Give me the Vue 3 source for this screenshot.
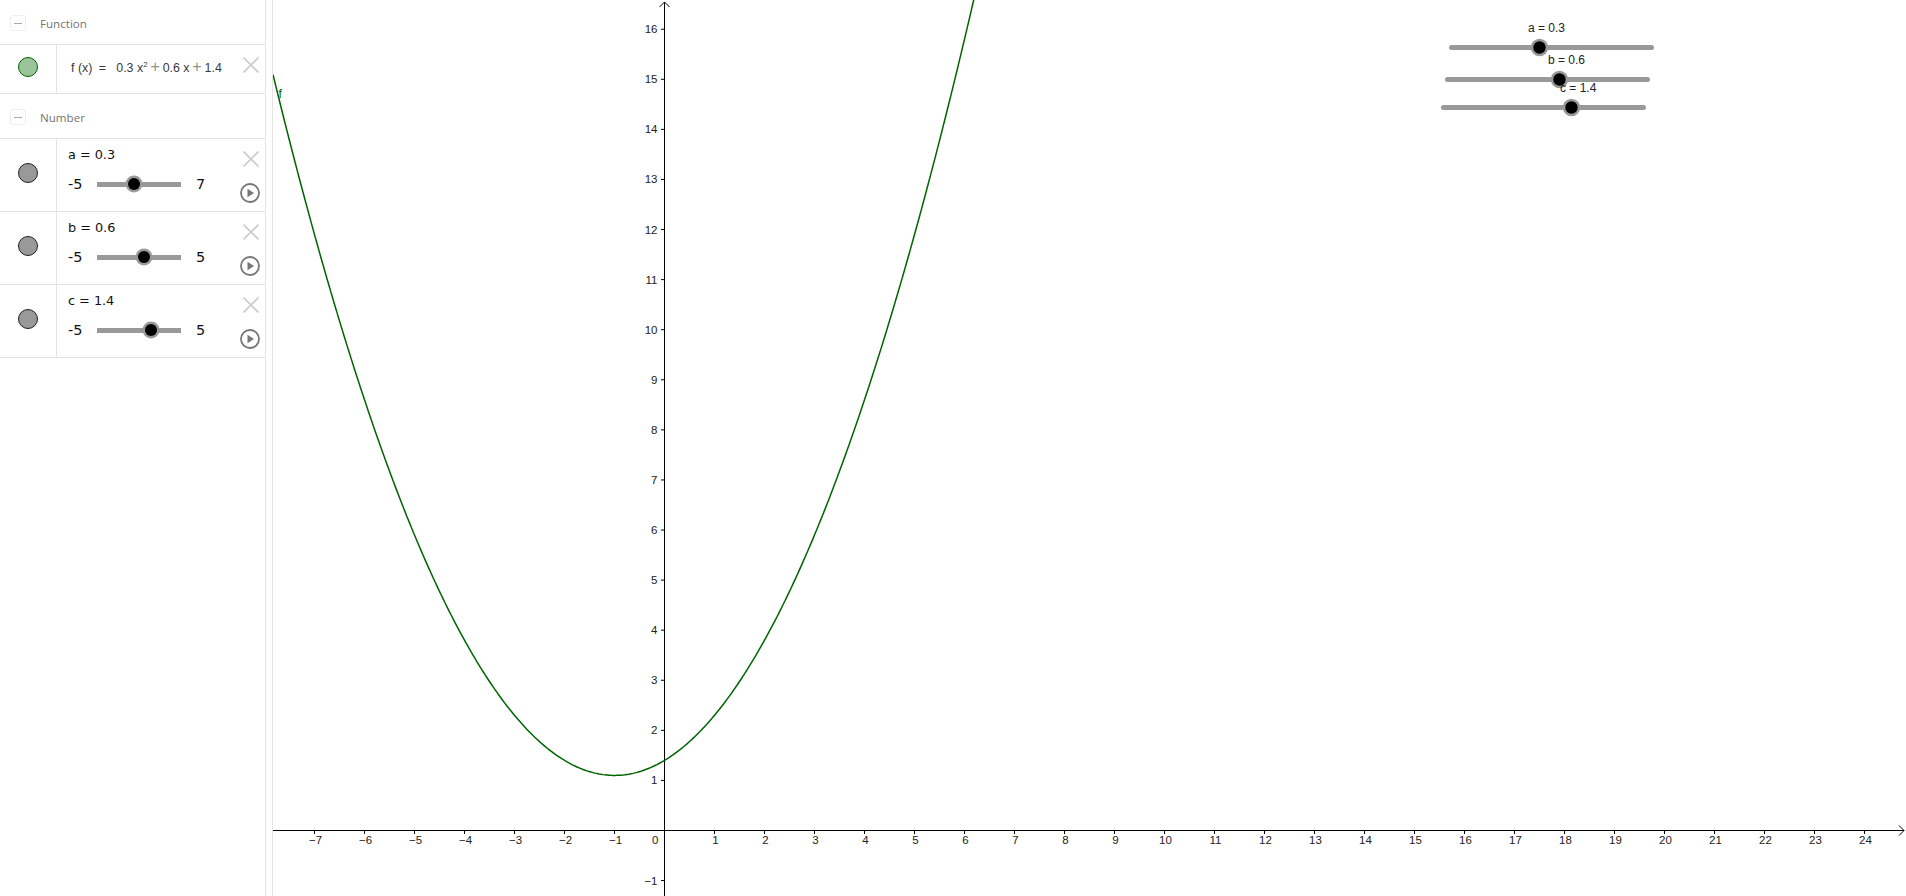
<script setup>
import { computed } from 'vue'

const originX = 664.5
const originY = 830.5
const unit = 50
const yUnit = 50.08
const width = 1633

const sx = (x) => originX - 273 + x * unit
const sy = (y) => originY - y * yUnit

const numbers = [
  { name: 'a', value: 0.3, min: -5, max: 7 },
  { name: 'b', value: 0.6, min: -5, max: 5 },
  { name: 'c', value: 1.4, min: -5, max: 5 },
].map((n) => ({ ...n, pct: ((n.value - n.min) / (n.max - n.min)) * 100 }))

const canvasSliders = [
  { label: 'a = 0.3', x1: 178.5, x2: 378.5, y: 47.5, tx: 266.5, lx: 255, ly: 32 },
  { label: 'b = 0.6', x1: 174.5, x2: 374.5, y: 79.5, tx: 286.5, lx: 275, ly: 64 },
  { label: 'c = 1.4', x1: 170.5, x2: 370.5, y: 107.5, tx: 298.5, lx: 287, ly: 92 },
]

const curve = computed(() => {
  const pts = []
  for (let px = 0; px <= 720; px += 2) {
    const x = (px - (originX - 273)) / unit
    const y = 0.3 * x * x + 0.6 * x + 1.4
    const py = sy(y)
    if (py > -10) pts.push(`${px},${py.toFixed(2)}`)
  }
  return pts.join(' ')
})

const xTicks = []
for (let i = -7; i <= 24; i++) if (i !== 0) xTicks.push(i)
const yTicks = []
for (let i = -1; i <= 16; i++) if (i !== 0) yTicks.push(i)
const fmt = (n) => (n < 0 ? '\u2212' + -n : '' + n)
</script>

<template>
  <div class="app">
    <aside class="panel">
      <div class="group">
        <span class="collapse"><i></i></span>
        <span class="group-name">Function</span>
      </div>
      <div class="row row-fn">
        <div class="marble-cell"><span class="marble green"></span></div>
        <div class="body">
          <div class="equation">f (x) <b>=</b> 0.3 x<sup>2</sup> <em>+</em> 0.6 x <em>+</em> 1.4</div>
        </div>
        <div class="actions">
          <svg class="x" viewBox="0 0 16 16"><path d="M0.5 0.5 15.5 15.5M15.5 0.5 0.5 15.5" /></svg>
        </div>
      </div>
      <div class="group">
        <span class="collapse"><i></i></span>
        <span class="group-name">Number</span>
      </div>
      <div v-for="n in numbers" :key="n.name" class="row">
        <div class="marble-cell"><span class="marble gray"></span></div>
        <div class="body">
          <div class="def">{{ n.name }} = {{ n.value }}</div>
          <div class="slider-line">
            <span class="bound min">{{ n.min }}</span>
            <span class="track"><span class="thumb" :style="{ left: n.pct + '%' }"></span></span>
            <span class="bound">{{ n.max }}</span>
          </div>
        </div>
        <div class="actions">
          <svg class="x" viewBox="0 0 16 16"><path d="M0.5 0.5 15.5 15.5M15.5 0.5 0.5 15.5" /></svg>
          <svg class="play" viewBox="0 0 20 20">
            <circle cx="10" cy="10" r="9" />
            <path d="M7.5 5.8 14 10 7.5 14.2Z" />
          </svg>
        </div>
      </div>
    </aside>
    <div class="splitter"></div>
    <svg class="canvas" :viewBox="`0 0 ${width} 896`">
      <g class="axes">
        <path :d="`M0 ${originY}H${width - 2}`" />
        <path :d="`M${originX - 273} 896V2`" />
        <path :d="`M${width - 7} ${originY - 5}L${width - 2} ${originY}L${width - 7} ${originY + 5}`" />
        <path :d="`M${originX - 273 - 5} 7L${originX - 273} 2L${originX - 273 + 5} 7`" />
        <path v-for="t in xTicks" :key="'xt' + t" :d="`M${sx(t)} ${originY}v3.5`" />
        <path v-for="t in yTicks" :key="'yt' + t" :d="`M${originX - 273} ${sy(t)}h-3.5`" />
      </g>
      <g class="labels">
        <text v-for="t in xTicks" :key="'xl' + t" :x="sx(t) + 1" y="844" text-anchor="middle">{{ fmt(t) }}</text>
        <text v-for="t in yTicks" :key="'yl' + t" :x="originX - 273 - 7" :y="sy(t) + 4" text-anchor="end">{{ fmt(t) }}</text>
        <text :x="originX - 273 - 6" y="844" text-anchor="end">0</text>
      </g>
      <polyline class="curve" :points="curve" />
      <text class="f-label" x="5.5" y="98">f</text>
      <g v-for="s in canvasSliders" :key="s.label">
        <line class="s-track" :x1="s.x1 + 1000" :x2="s.x2 + 1000" :y1="s.y" :y2="s.y" />
        <circle class="s-ring" :cx="s.tx + 1000" :cy="s.y" r="8.7" />
        <circle class="s-dot" :cx="s.tx + 1000" :cy="s.y" r="6.2" />
        <text class="s-label" :x="s.lx + 1000" :y="s.ly">{{ s.label }}</text>
      </g>
    </svg>
  </div>
</template>

<style scoped>
.app {
  display: flex;
  width: 1906px;
  height: 896px;
  background: #fff;
  overflow: hidden;
}
.panel {
  width: 265px;
  flex: none;
  border-right: 1px solid #e4e4e4;
  font-family: "DejaVu Sans", sans-serif;
}
.splitter {
  width: 6px;
  flex: none;
  border-right: 1px solid #e4e4e4;
}
.canvas {
  width: 1633px;
  height: 896px;
  flex: none;
  display: block;
}
.group {
  height: 42px;
  border-bottom: 1px solid #e4e4e4;
  display: flex;
  align-items: center;
  padding-left: 10px;
  gap: 14px;
  padding-top: 2px;
}
.collapse {
  width: 14px;
  height: 14px;
  border: 1px solid #eee;
  border-radius: 3px;
  display: flex;
  align-items: center;
  justify-content: center;
}
.collapse i {
  width: 8px;
  height: 1px;
  background: #aaa;
}
.group-name {
  font-family: "Open Sans", sans-serif;
  font-size: 11.6px;
  color: #757575;
}
.row {
  display: flex;
  height: 72px;
  border-bottom: 1px solid #e4e4e4;
}
.row-fn {
  height: 48px;
}
.marble-cell {
  width: 57px;
  flex: none;
  border-right: 1px solid #e4e4e4;
  display: flex;
  align-items: center;
  justify-content: center;
  padding-bottom: 4px;
  box-sizing: border-box;
}
.marble {
  width: 18px;
  height: 18px;
  border-radius: 50%;
  border: 1px solid #222;
}
.marble.green {
  background: #9bc49b;
  border-color: #006400;
}
.marble.gray {
  background: #999;
}
.body {
  flex: 1;
  padding-left: 11px;
  min-width: 0;
}
.def {
  font-size: 12.8px;
  line-height: 16px;
  margin-top: 8px;
  color: #111;
}
.slider-line {
  display: flex;
  align-items: center;
  margin-top: 13px;
  height: 16px;
}
.bound {
  font-size: 14.5px;
  color: #111;
}
.bound.min {
  width: 29px;
}
.track {
  position: relative;
  width: 84px;
  height: 5px;
  background: #999;
  margin-right: 15px;
}
.thumb {
  position: absolute;
  top: 50%;
  width: 12px;
  height: 12px;
  background: #000;
  border-radius: 50%;
  transform: translate(-50%, -50%);
  box-shadow: 0 0 0 2.5px #999;
}
.equation {
  margin: 15px 0 0 3px;
  font-family: "Liberation Sans", sans-serif;
  font-size: 12.4px;
  line-height: 16px;
  color: #3a3a3a;
  white-space: nowrap;
}
.equation sup {
  font-size: 8px;
  line-height: 0;
}
.equation em {
  font-style: normal;
  font-size: 16px;
  line-height: 0;
  margin: 0 -0.6px;
  color: #8a948a;
}
.equation b {
  font-weight: normal;
  margin: 0 6.8px 0 3px;
}
.actions {
  width: 28px;
  flex: none;
  display: flex;
  flex-direction: column;
  align-items: center;
  padding-top: 12px;
  box-sizing: border-box;
}
.x {
  width: 16px;
  height: 16px;
  flex: none;
}
.x path {
  stroke: #ccc;
  stroke-width: 1.6;
  fill: none;
}
.play {
  width: 20px;
  height: 20px;
  margin-top: 16px;
  margin-right: 2px;
  flex: none;
}
.play circle {
  fill: #fff;
  stroke: #777;
  stroke-width: 1.8;
}
.play path {
  fill: #777;
}
.axes path {
  stroke: #000;
  stroke-width: 1;
  fill: none;
}
.labels text {
  font-family: "Liberation Sans", sans-serif;
  font-size: 11.5px;
  fill: #222;
}
.curve {
  fill: none;
  stroke: #006400;
  stroke-width: 1.5;
}
.f-label {
  font-family: "Liberation Sans", sans-serif;
  font-size: 12px;
  fill: #006400;
}
.s-track {
  stroke: #999;
  stroke-width: 5;
  stroke-linecap: round;
}
.s-ring {
  fill: #999;
}
.s-dot {
  fill: #000;
}
.s-label {
  font-family: "Liberation Sans", sans-serif;
  font-size: 12px;
  fill: #222;
}
</style>

<style>
html, body {
  margin: 0;
  background: #fff;
}
</style>
